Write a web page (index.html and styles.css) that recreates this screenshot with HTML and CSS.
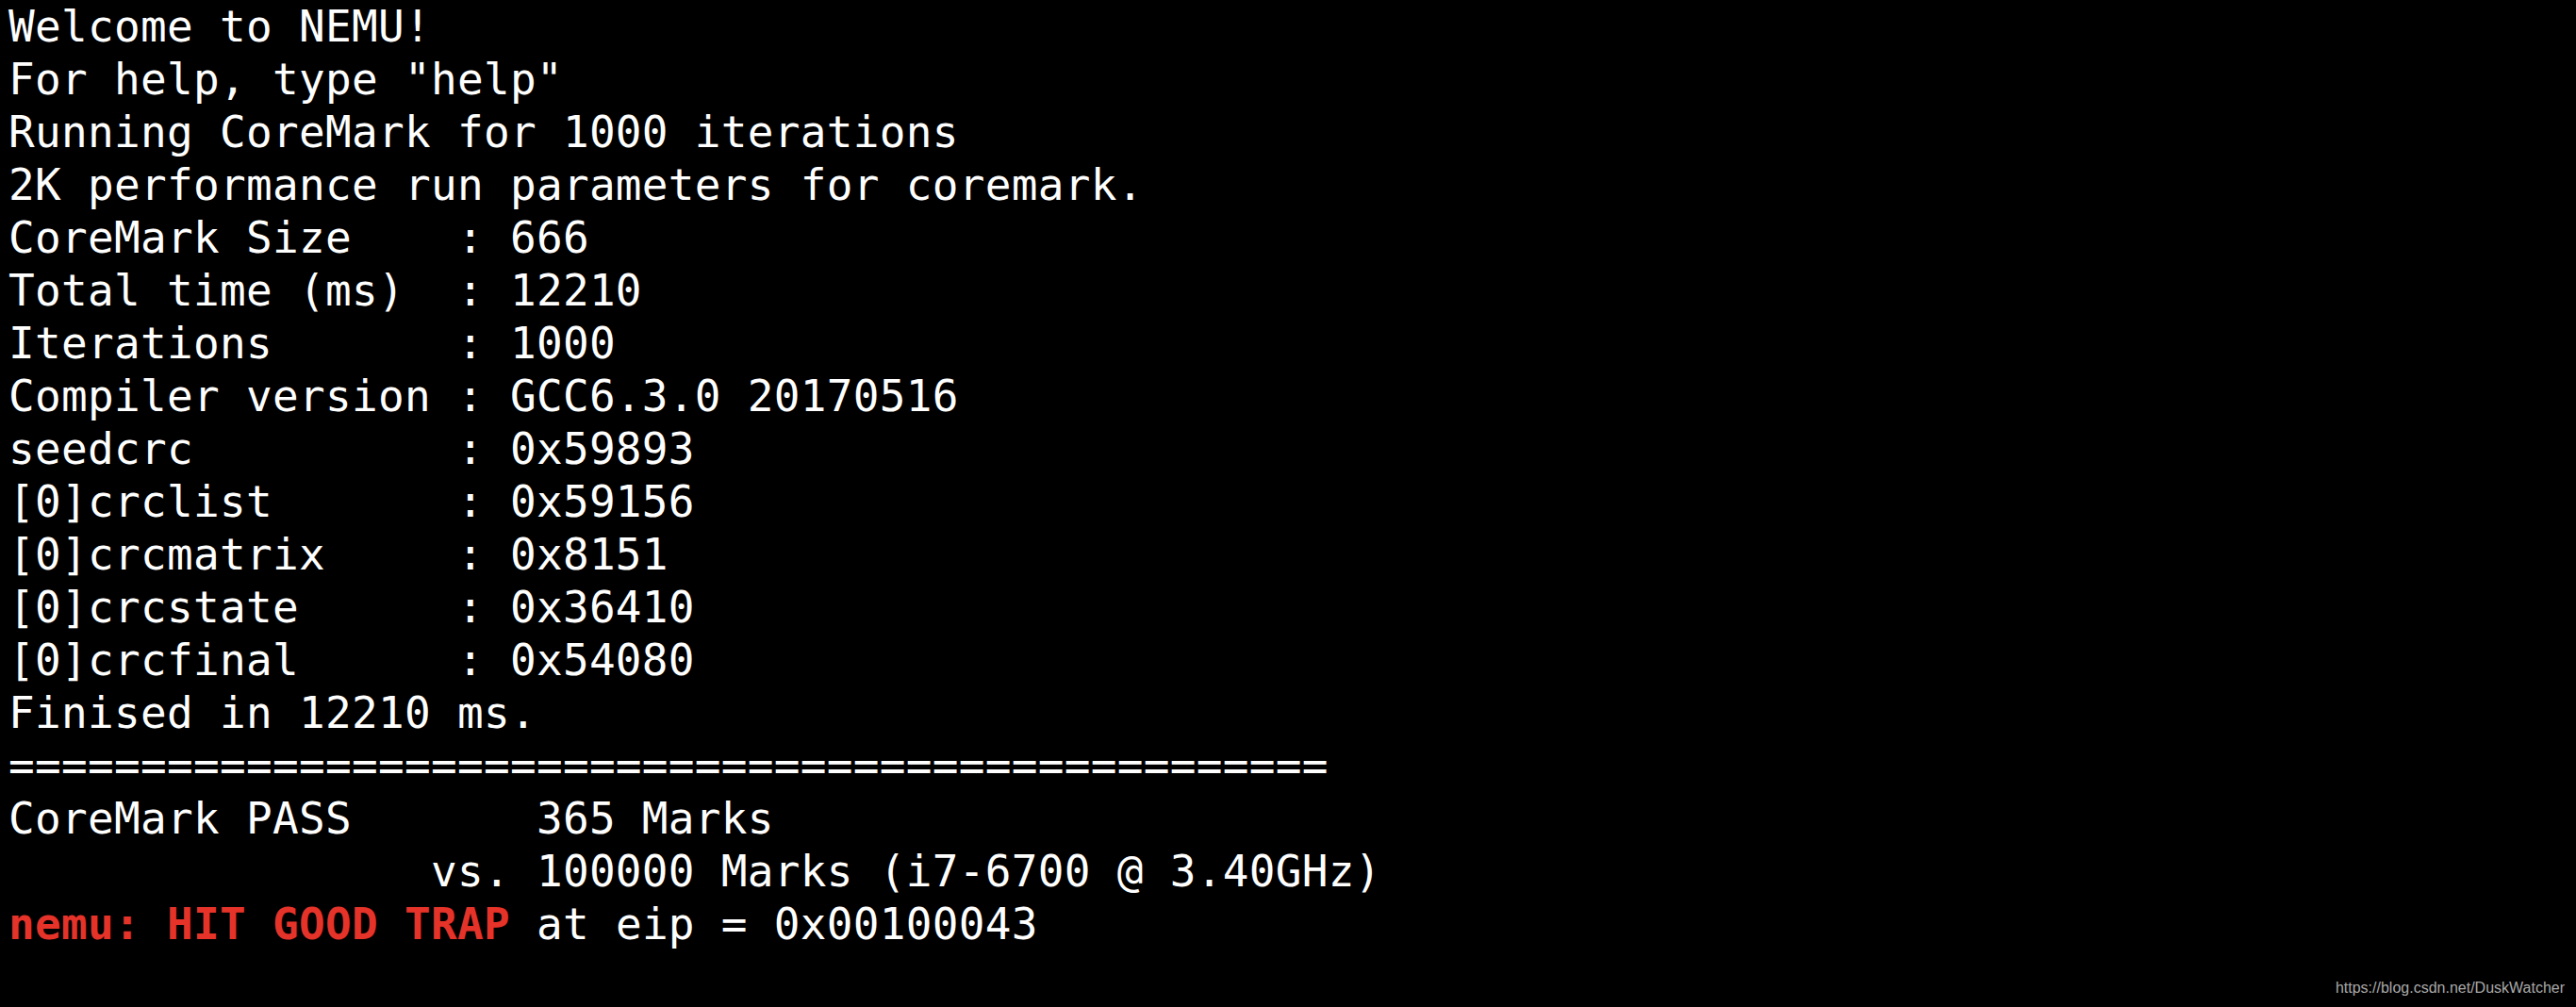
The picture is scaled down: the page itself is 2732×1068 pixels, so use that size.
FILE: index.html
```html
<!DOCTYPE html>
<html>
<head>
<meta charset="utf-8">
<link rel="stylesheet" href="styles.css">
</head>
<body>
<main class="terminal">
<pre class="output">Welcome to NEMU!
For help, type "help"
Running CoreMark for 1000 iterations
2K performance run parameters for coremark.
CoreMark Size    : 666
Total time (ms)  : 12210
Iterations       : 1000
Compiler version : GCC6.3.0 20170516
seedcrc          : 0x59893
[0]crclist       : 0x59156
[0]crcmatrix     : 0x8151
[0]crcstate      : 0x36410
[0]crcfinal      : 0x54080
Finised in 12210 ms.
==================================================
CoreMark PASS       365 Marks
                vs. 100000 Marks (i7-6700 @ 3.40GHz)
<span class="trap">nemu: HIT GOOD TRAP</span> at eip = 0x00100043</pre>
<div class="watermark">https://blog.csdn.net/DuskWatcher</div>
</main>
</body>
</html>
```
FILE: styles.css
```css
html, body {
  margin: 0;
  padding: 0;
  background: #000;
}
.terminal {
  width: 2732px;
  height: 1068px;
  background: #000;
  display: flex;
  flex-direction: column;
  justify-content: space-between;
  overflow: hidden;
}
.output {
  margin: 0 0 0 9px;
  color: #fff;
  font-family: "DejaVu Sans Mono", monospace;
  font-size: 46px;
  letter-spacing: 0.3px;
  line-height: 56px;
  white-space: pre;
}
.trap {
  color: #e5332a;
  font-weight: bold;
}
.watermark {
  align-self: flex-end;
  margin: 0 12px 10px 0;
  color: #a8a8a8;
  font-family: "Liberation Sans", Arial, sans-serif;
  font-size: 16px;
  line-height: 20px;
}
```
